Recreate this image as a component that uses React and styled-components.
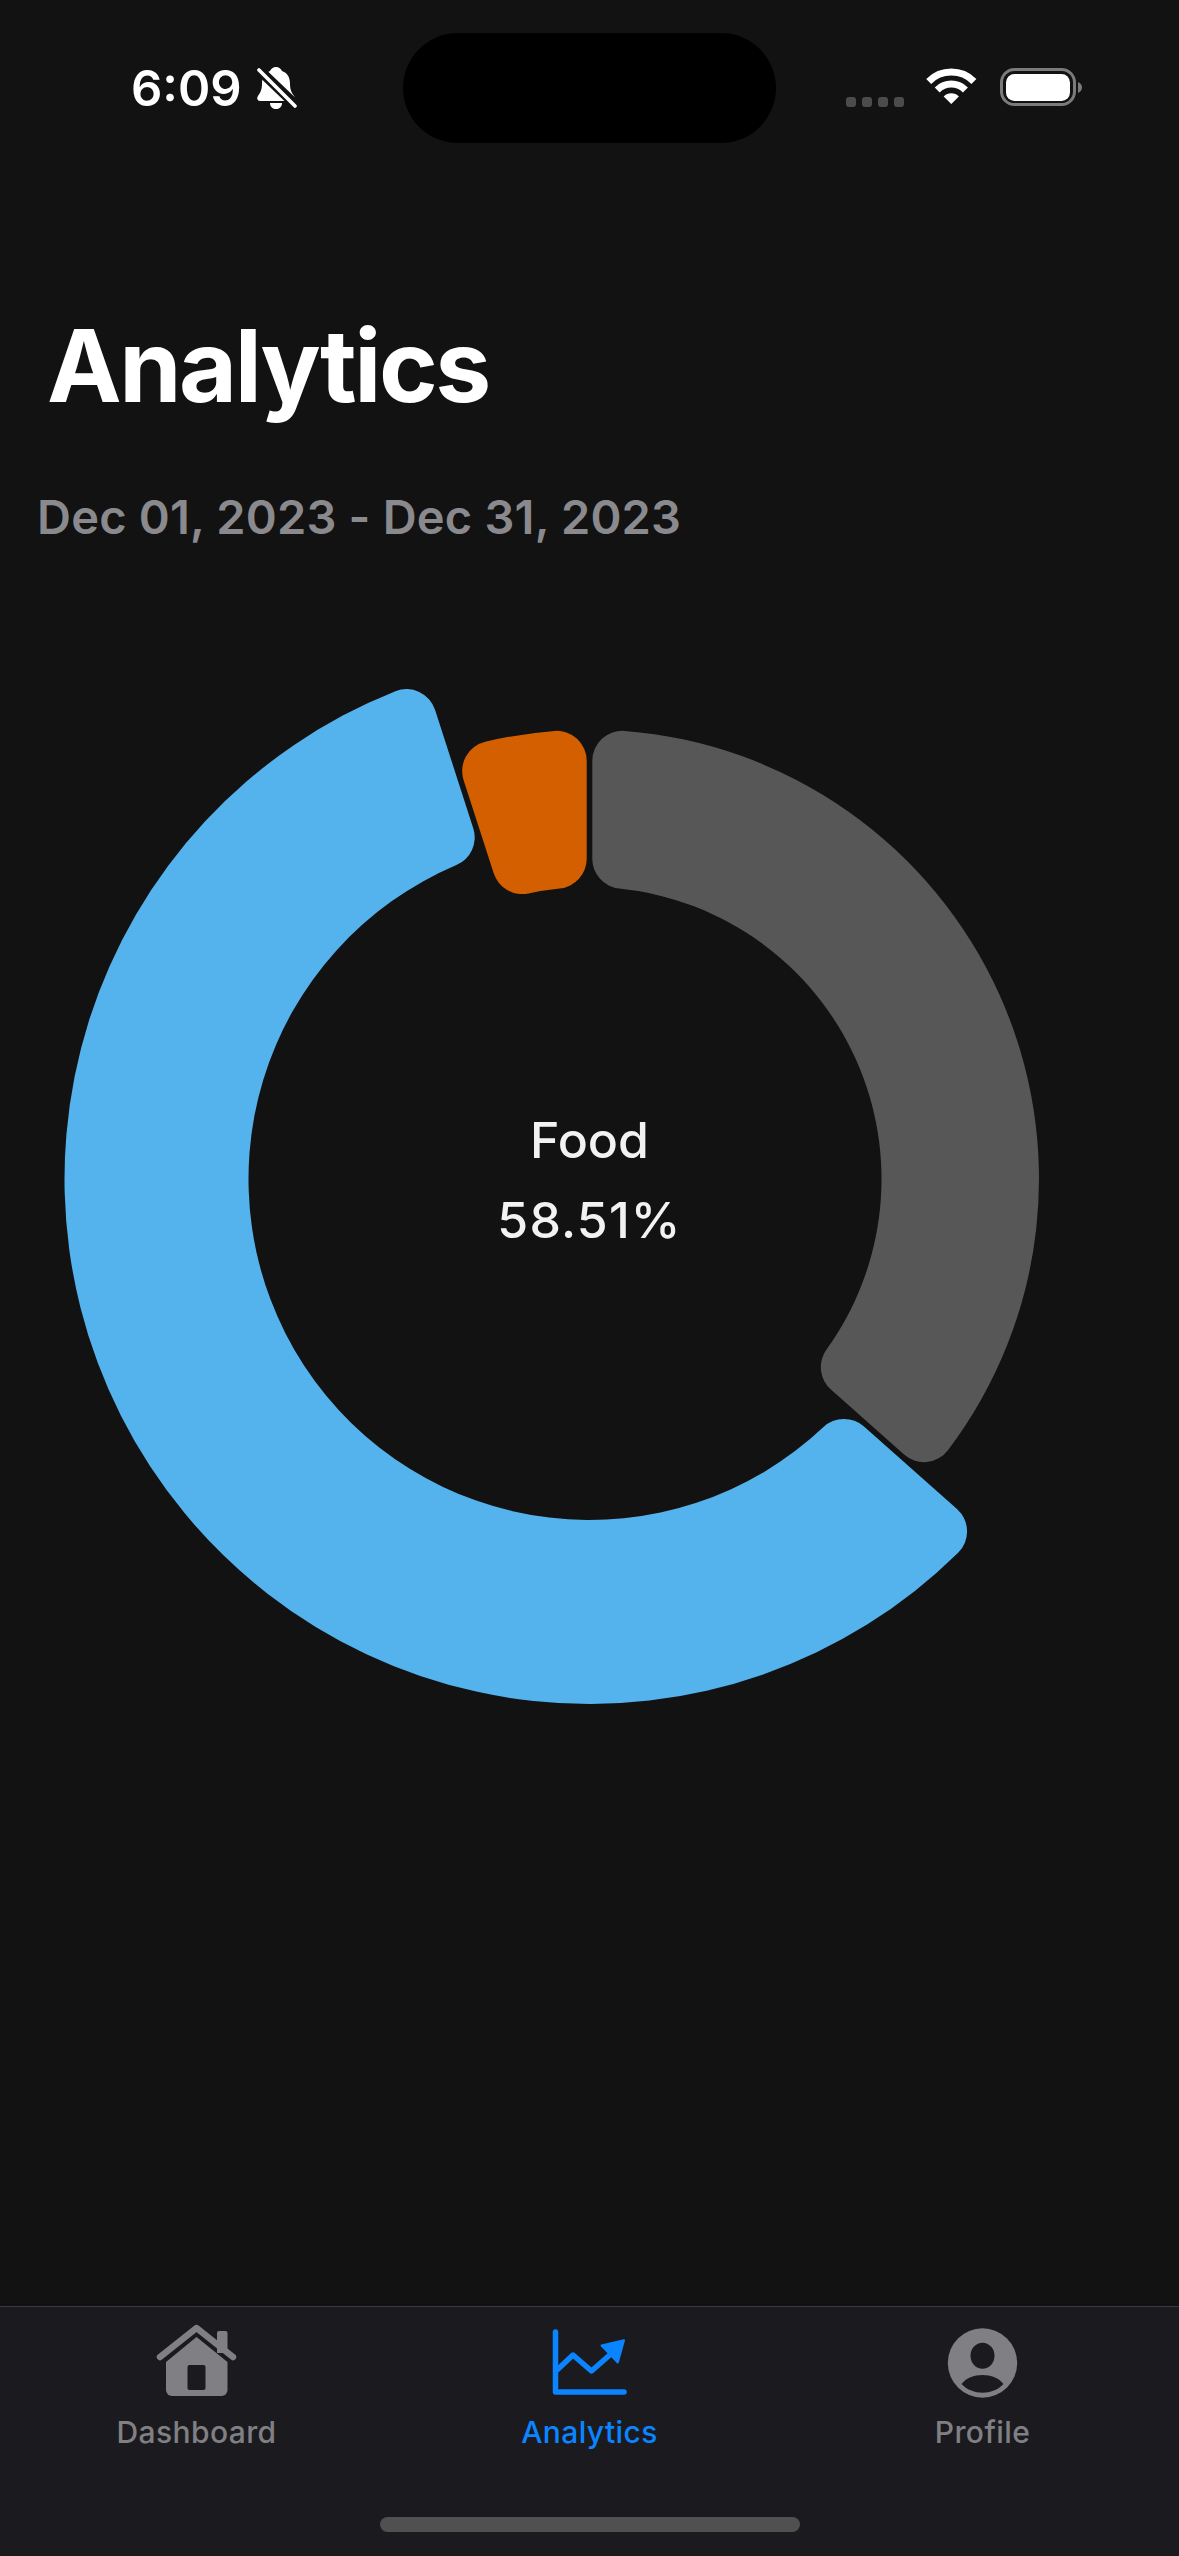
import React from "react";
import styled, { createGlobalStyle } from "styled-components";

const GlobalStyle = createGlobalStyle`
  html, body {
    margin: 0;
    padding: 0;
    background: #121212;
  }
`;

const Screen = styled.div`
  width: 1179px;
  height: 2556px;
  display: flex;
  flex-direction: column;
  background: #121212;
  font-family: Inter, "Liberation Sans", sans-serif;
  overflow: hidden;
`;

const StatusBar = styled.div`
  display: grid;
  grid-template-columns: 403px 373px 1fr;
  height: 306px;
`;

const StatusLeft = styled.div`
  display: flex;
  align-items: center;
  gap: 15px;
  height: 110px;
  margin-top: 33px;
  padding-left: 131px;
`;

const Time = styled.span`
  color: #fff;
  font-size: 49px;
  font-weight: 600;
  line-height: 1;
`;

const Island = styled.div`
  height: 110px;
  margin-top: 33px;
  border-radius: 55px;
  background: #000;
`;

const StatusRight = styled.div`
  display: flex;
  align-items: flex-start;
  margin-top: 68px;
  padding-left: 70px;
`;

const Dots = styled.div`
  display: flex;
  gap: 6px;
  margin-top: 29px;
  margin-right: 22px;
`;

const Dot = styled.span`
  width: 10px;
  height: 10px;
  border-radius: 3px;
  background: #4c4c4c;
`;

const WifiIcon = styled.svg`
  width: 52px;
  height: 38px;
  margin-right: 22px;
`;

const BatteryIcon = styled.svg`
  width: 84px;
  height: 40px;
`;

const Title = styled.h1`
  margin: 0;
  padding-left: 47px;
  color: #fff;
  font-size: 100px;
  font-weight: 700;
  line-height: 120px;
  letter-spacing: -2.4px;
`;

const DateRange = styled.div`
  margin-top: 63px;
  padding-left: 37px;
  color: #8a8a8e;
  font-size: 47px;
  font-weight: 600;
  line-height: 56px;
  letter-spacing: 0.2px;
`;

const Chart = styled.div`
  position: relative;
  width: 1179px;
  height: 1100px;
  margin-top: 84px;
`;

const ChartSvg = styled.svg`
  display: block;
  width: 100%;
  height: 100%;
`;

const CenterLabel = styled.div`
  position: absolute;
  left: 0;
  right: 0;
  top: 483px;
  display: flex;
  flex-direction: column;
  align-items: center;
  gap: 24px;
  color: #f2f2f2;
  font-size: 50px;
  font-weight: 500;
  line-height: 56px;
`;

const CenterValue = styled.span`
  letter-spacing: 1.2px;
`;

const TabBar = styled.nav`
  position: relative;
  margin-top: auto;
  height: 250px;
  box-sizing: border-box;
  display: grid;
  grid-template-columns: repeat(3, 393px);
  border-top: 1px solid #3a3a3c;
  background: #1b1b1f;
`;

const Tab = styled.div`
  display: flex;
  flex-direction: column;
  align-items: center;
  padding-top: 15px;
  color: ${(props) => (props.$active ? "#0a84ff" : "#808084")};
`;

const TabIcon = styled.svg`
  width: 90px;
  height: 80px;
`;

const TabLabel = styled.span`
  margin-top: 12px;
  font-size: 30px;
  font-weight: 500;
  line-height: 36px;
  letter-spacing: 0.4px;
`;

const HomeIndicator = styled.div`
  position: absolute;
  left: 380px;
  top: 210px;
  width: 420px;
  height: 15px;
  border-radius: 8px;
  background: #505050;
`;

const CX = 589.5;
const CY = 550;

const polar = (radius, deg, offset = 0) => {
  const a = (deg * Math.PI) / 180;
  return [
    CX + radius * Math.sin(a) + offset * Math.cos(a),
    CY - radius * Math.cos(a) + offset * Math.sin(a),
  ].map((n) => n.toFixed(2)).join(" ");
};

// annular sector with rounded corners, angles clockwise from 12 o'clock
const slicePath = ({ start, end, inner, outer, pad = 2.8, corner = 30 }) => {
  const outerA = (Math.asin((pad + corner) / (outer - corner)) * 180) / Math.PI;
  const innerA = (Math.asin((pad + corner) / (inner + corner)) * 180) / Math.PI;
  const outerR = Math.sqrt((outer - corner) ** 2 - (pad + corner) ** 2);
  const innerR = Math.sqrt((inner + corner) ** 2 - (pad + corner) ** 2);
  const large = end - start > 180 ? 1 : 0;
  return [
    `M ${polar(outerR, start, pad)}`,
    `A ${corner} ${corner} 0 0 1 ${polar(outer, start + outerA)}`,
    `A ${outer} ${outer} 0 ${large} 1 ${polar(outer, end - outerA)}`,
    `A ${corner} ${corner} 0 0 1 ${polar(outerR, end, -pad)}`,
    `L ${polar(innerR, end, -pad)}`,
    `A ${corner} ${corner} 0 0 1 ${polar(inner, end - innerA)}`,
    `A ${inner} ${inner} 0 ${large} 0 ${polar(inner, start + innerA)}`,
    `A ${corner} ${corner} 0 0 1 ${polar(innerR, start, pad)}`,
    "Z",
  ].join(" ");
};

const slices = [
  { name: "Other", color: "#575757", start: 0, end: 131.6, inner: 292, outer: 449.5 },
  { name: "Food", color: "#54b2ec", start: 131.6, end: 342.1, inner: 341, outer: 525 },
  { name: "Bills", color: "#d35f00", start: 342.1, end: 360, inner: 292, outer: 449.5 },
];

const BellOff = () => (
  <svg width="40" height="44" viewBox="0 0 40 44">
    <path
      fill="#fff"
      d="M19 1c3 0 5 2 6 4 6 2 8 7 8 13 0 6 2 9 4 12 2 3 0 5-2 5H3c-2 0-4-2-2-5 2-3 4-6 4-12 0-6 2-11 8-13 1-2 3-4 6-4z"
    />
    <path fill="#fff" d="M13 37h12c0 4-3 6-6 6s-6-2-6-6z" />
    <path stroke="#121212" strokeWidth="10" d="M-2 0L42 42" />
    <path stroke="#fff" strokeWidth="3.6" strokeLinecap="round" d="M2 4L38 40" />
  </svg>
);

const Wifi = () => (
  <WifiIcon viewBox="0 0 52 38">
    <path fill="none" stroke="#fff" strokeWidth="7" d="M2.7 13.4A32 32 0 0 1 47.9 13.4" />
    <path fill="none" stroke="#fff" strokeWidth="7" d="M11.2 21.9A20 20 0 0 1 39.4 21.9" />
    <path fill="#fff" d="M25.3 36L17.7 28.4A10.7 10.7 0 0 1 32.9 28.4Z" />
  </WifiIcon>
);

const Battery = () => (
  <BatteryIcon viewBox="0 0 84 40">
    <rect x="1.5" y="1.5" width="73" height="35" rx="13" fill="none" stroke="#7b7b7b" strokeWidth="3" />
    <rect x="6" y="6" width="64" height="27" rx="8.5" fill="#fff" />
    <path fill="#7b7b7b" d="M78 14c2.500 1 4 3 4 5.500s-1.500 4.500-4 5.500z" />
  </BatteryIcon>
);

const HomeGlyph = () => (
  <TabIcon viewBox="0 0 90 80">
    <path fill="currentColor" d="M65 11a2 2 0 0 1 2-2h6.500a2 2 0 0 1 2 2v20H65z" />
    <path fill="none" stroke="currentColor" strokeWidth="6.500" strokeLinecap="round" strokeLinejoin="round" d="M8 35L44.500 6L81 35" />
    <path
      fill="currentColor"
      d="M44.500 15L75.500 40V68a6 6 0 0 1-6 6H20a6 6 0 0 1-6-6V40Z"
    />
    <rect x="35.500" y="43" width="18" height="25" rx="2" fill="#1b1b1f" />
  </TabIcon>
);

const ChartGlyph = () => (
  <TabIcon viewBox="0 0 90 80">
    <path fill="none" stroke="currentColor" strokeWidth="5.500" strokeLinecap="round" strokeLinejoin="round" d="M10.500 10V70H79" />
    <path fill="none" stroke="currentColor" strokeWidth="5.500" strokeLinecap="round" strokeLinejoin="round" d="M12 48L28 33L46.500 49L67 31" />
    <path fill="currentColor" stroke="currentColor" strokeWidth="2" strokeLinejoin="round" d="M56.500 23.500L79 18.300L72.800 40.500Z" />
  </TabIcon>
);

const ProfileGlyph = () => (
  <TabIcon viewBox="0 0 90 80">
    <circle cx="44.500" cy="41" r="34.700" fill="currentColor" />
    <ellipse cx="44.500" cy="33.700" rx="12" ry="13" fill="#1b1b1f" />
    <path
      fill="#1b1b1f"
      d="M23.500 62C28 56 36 53 44.500 53S61 56 65.500 62C60 68 52 70.700 44.500 70.700S29 68 23.500 62Z"
    />
  </TabIcon>
);

const tabs = [
  { label: "Dashboard", icon: <HomeGlyph /> },
  { label: "Analytics", icon: <ChartGlyph />, active: true },
  { label: "Profile", icon: <ProfileGlyph /> },
];

const App = () => {
  return (
    <Screen>
      <GlobalStyle />
      <StatusBar>
        <StatusLeft>
          <Time>6:09</Time>
          <BellOff />
        </StatusLeft>
        <Island />
        <StatusRight>
          <Dots>
            <Dot />
            <Dot />
            <Dot />
            <Dot />
          </Dots>
          <Wifi />
          <Battery />
        </StatusRight>
      </StatusBar>
      <Title>Analytics</Title>
      <DateRange>Dec 01, 2023 - Dec 31, 2023</DateRange>
      <Chart>
        <ChartSvg viewBox="0 0 1179 1100">
          {slices.map((slice) => (
            <path key={slice.name} d={slicePath(slice)} fill={slice.color} />
          ))}
        </ChartSvg>
        <CenterLabel>
          <span>Food</span>
          <CenterValue>58.51%</CenterValue>
        </CenterLabel>
      </Chart>
      <TabBar>
        {tabs.map((tab) => (
          <Tab key={tab.label} $active={tab.active}>
            {tab.icon}
            <TabLabel>{tab.label}</TabLabel>
          </Tab>
        ))}
        <HomeIndicator />
      </TabBar>
    </Screen>
  );
};

export default App;
